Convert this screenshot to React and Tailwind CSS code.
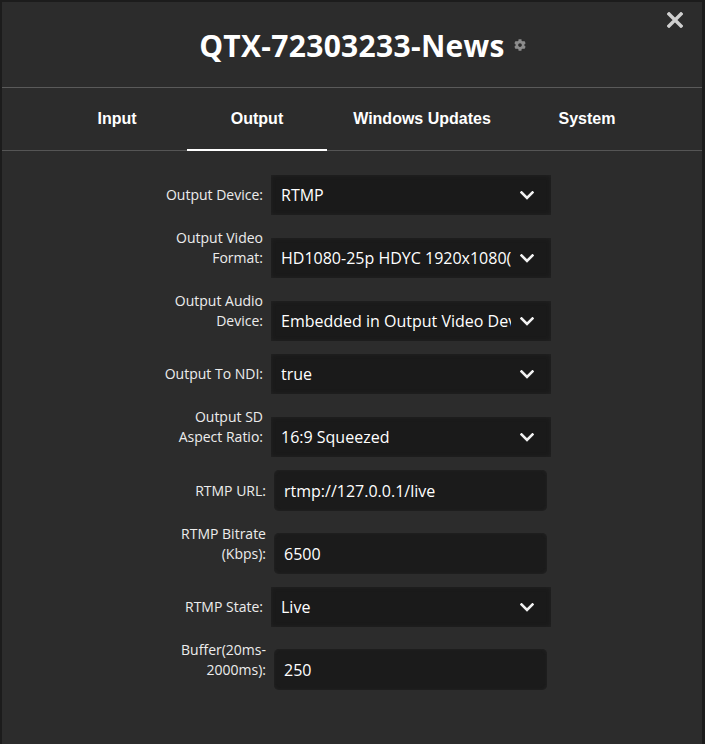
import React from 'react';
import { FaCog } from 'react-icons/fa';

const tabs = [
  { name: 'Input', w: 'w-[140px]' },
  { name: 'Output', w: 'w-[140px]', active: true },
  { name: 'Windows Updates', w: 'w-[190px]' },
  { name: 'System', w: 'w-[140px]' },
];

const fields = [
  { label: ['Output Device:'], type: 'select', value: 'RTMP' },
  { label: ['Output Video', 'Format:'], type: 'select', value: 'HD1080-25p HDYC 1920x1080(25fps)' },
  { label: ['Output Audio', 'Device:'], type: 'select', value: 'Embedded in Output Video Device' },
  { label: ['Output To NDI:'], type: 'select', value: 'true' },
  { label: ['Output SD', 'Aspect Ratio:'], type: 'select', value: '16:9 Squeezed' },
  { label: ['RTMP URL:'], type: 'input', value: 'rtmp://127.0.0.1/live' },
  { label: ['RTMP Bitrate', '(Kbps):'], type: 'input', value: '6500' },
  { label: ['RTMP State:'], type: 'select', value: 'Live' },
  { label: ['Buffer(20ms-', '2000ms):'], type: 'input', value: '250' },
];

const Chevron = () => (
  <svg width="14" height="9" viewBox="0 0 14 9" className="shrink-0">
    <path d="M1.5 1.5 L7 7 L12.5 1.5" fill="none" stroke="#f2f2f2" strokeWidth="2.6" strokeLinecap="square" />
  </svg>
);

const Campo = ({ campo }) => {
  const esInput = campo.type === 'input';
  return (
    <div className={`flex items-end ${esInput ? 'pl-[3px]' : ''}`}>
      {/* etiqueta alineada a la derecha */}
      <label className="w-[110px] shrink-0 pb-[10px] text-right text-[14px] leading-[20px] text-[#ececec] whitespace-nowrap">
        {campo.label.map((l, i) => (
          <div key={i}>{l}</div>
        ))}
      </label>
      {esInput ? (
        <input
          type="text"
          defaultValue={campo.value}
          className="ml-2 w-[273px] h-[41px] rounded-[5px] bg-[#1b1b1b] pl-[10px] text-[16px] text-white shadow-[inset_0_0_3px_#262626] outline-none"
        />
      ) : (
        <div className="ml-2 w-[280px] h-10 bg-[#1a1a1a] shadow-[inset_0_0_4px_#252525] flex items-center pl-[10px] pr-[17px]">
          <div className="flex-1 overflow-hidden whitespace-nowrap text-[16px] text-white mr-[9px]">{campo.value}</div>
          <Chevron />
        </div>
      )}
    </div>
  );
};

export default function App() {
  return (
    <div className="min-h-[744px] bg-[#1c1c1c] pl-[2px] pt-[2px] pr-[3px]" style={{ fontFamily: '"Open Sans", "Noto Sans", sans-serif' }}>
      <div className="relative min-h-[742px] bg-[#2c2c2c]">
        {/* cerrar */}
        <button className="absolute right-[19px] top-[10px] p-0">
          <svg width="16" height="16" viewBox="0 0 16 16">
            <path d="M2 2 L14 14 M14 2 L2 14" stroke="#cfcfcf" strokeWidth="3.4" strokeLinecap="square" />
          </svg>
        </button>

        {/* titulo */}
        <div className="h-[85px] flex items-center justify-center">
          <h1 className="relative text-[30px] font-bold text-white tracking-[0.3px] mt-[1px]">
            QTX-72303233-News
            <FaCog className="absolute left-full top-1/2 -translate-y-1/2 ml-[9px] text-[#8c8c8c]" size={12} />
          </h1>
        </div>
        <div className="h-px bg-[#5a5a5a]" />

        {/* pestañas */}
        <div className="flex justify-center border-b border-[#555]" style={{ fontFamily: '"Liberation Sans", Arial, sans-serif' }}>
          {tabs.map((t) => (
            <div
              key={t.name}
              className={`${t.w} h-[63px] flex items-center justify-center text-[16px] font-bold text-white border-b-2 -mb-px ${
                t.active ? 'border-white' : 'border-transparent'
              }`}
            >
              {t.name}
            </div>
          ))}
        </div>

        {/* formulario */}
        <div className="w-[398px] mx-auto pt-[24px] flex flex-col gap-[13px]">
          {fields.map((f, i) => (
            <Campo key={i} campo={f} />
          ))}
        </div>
      </div>
    </div>
  );
}
